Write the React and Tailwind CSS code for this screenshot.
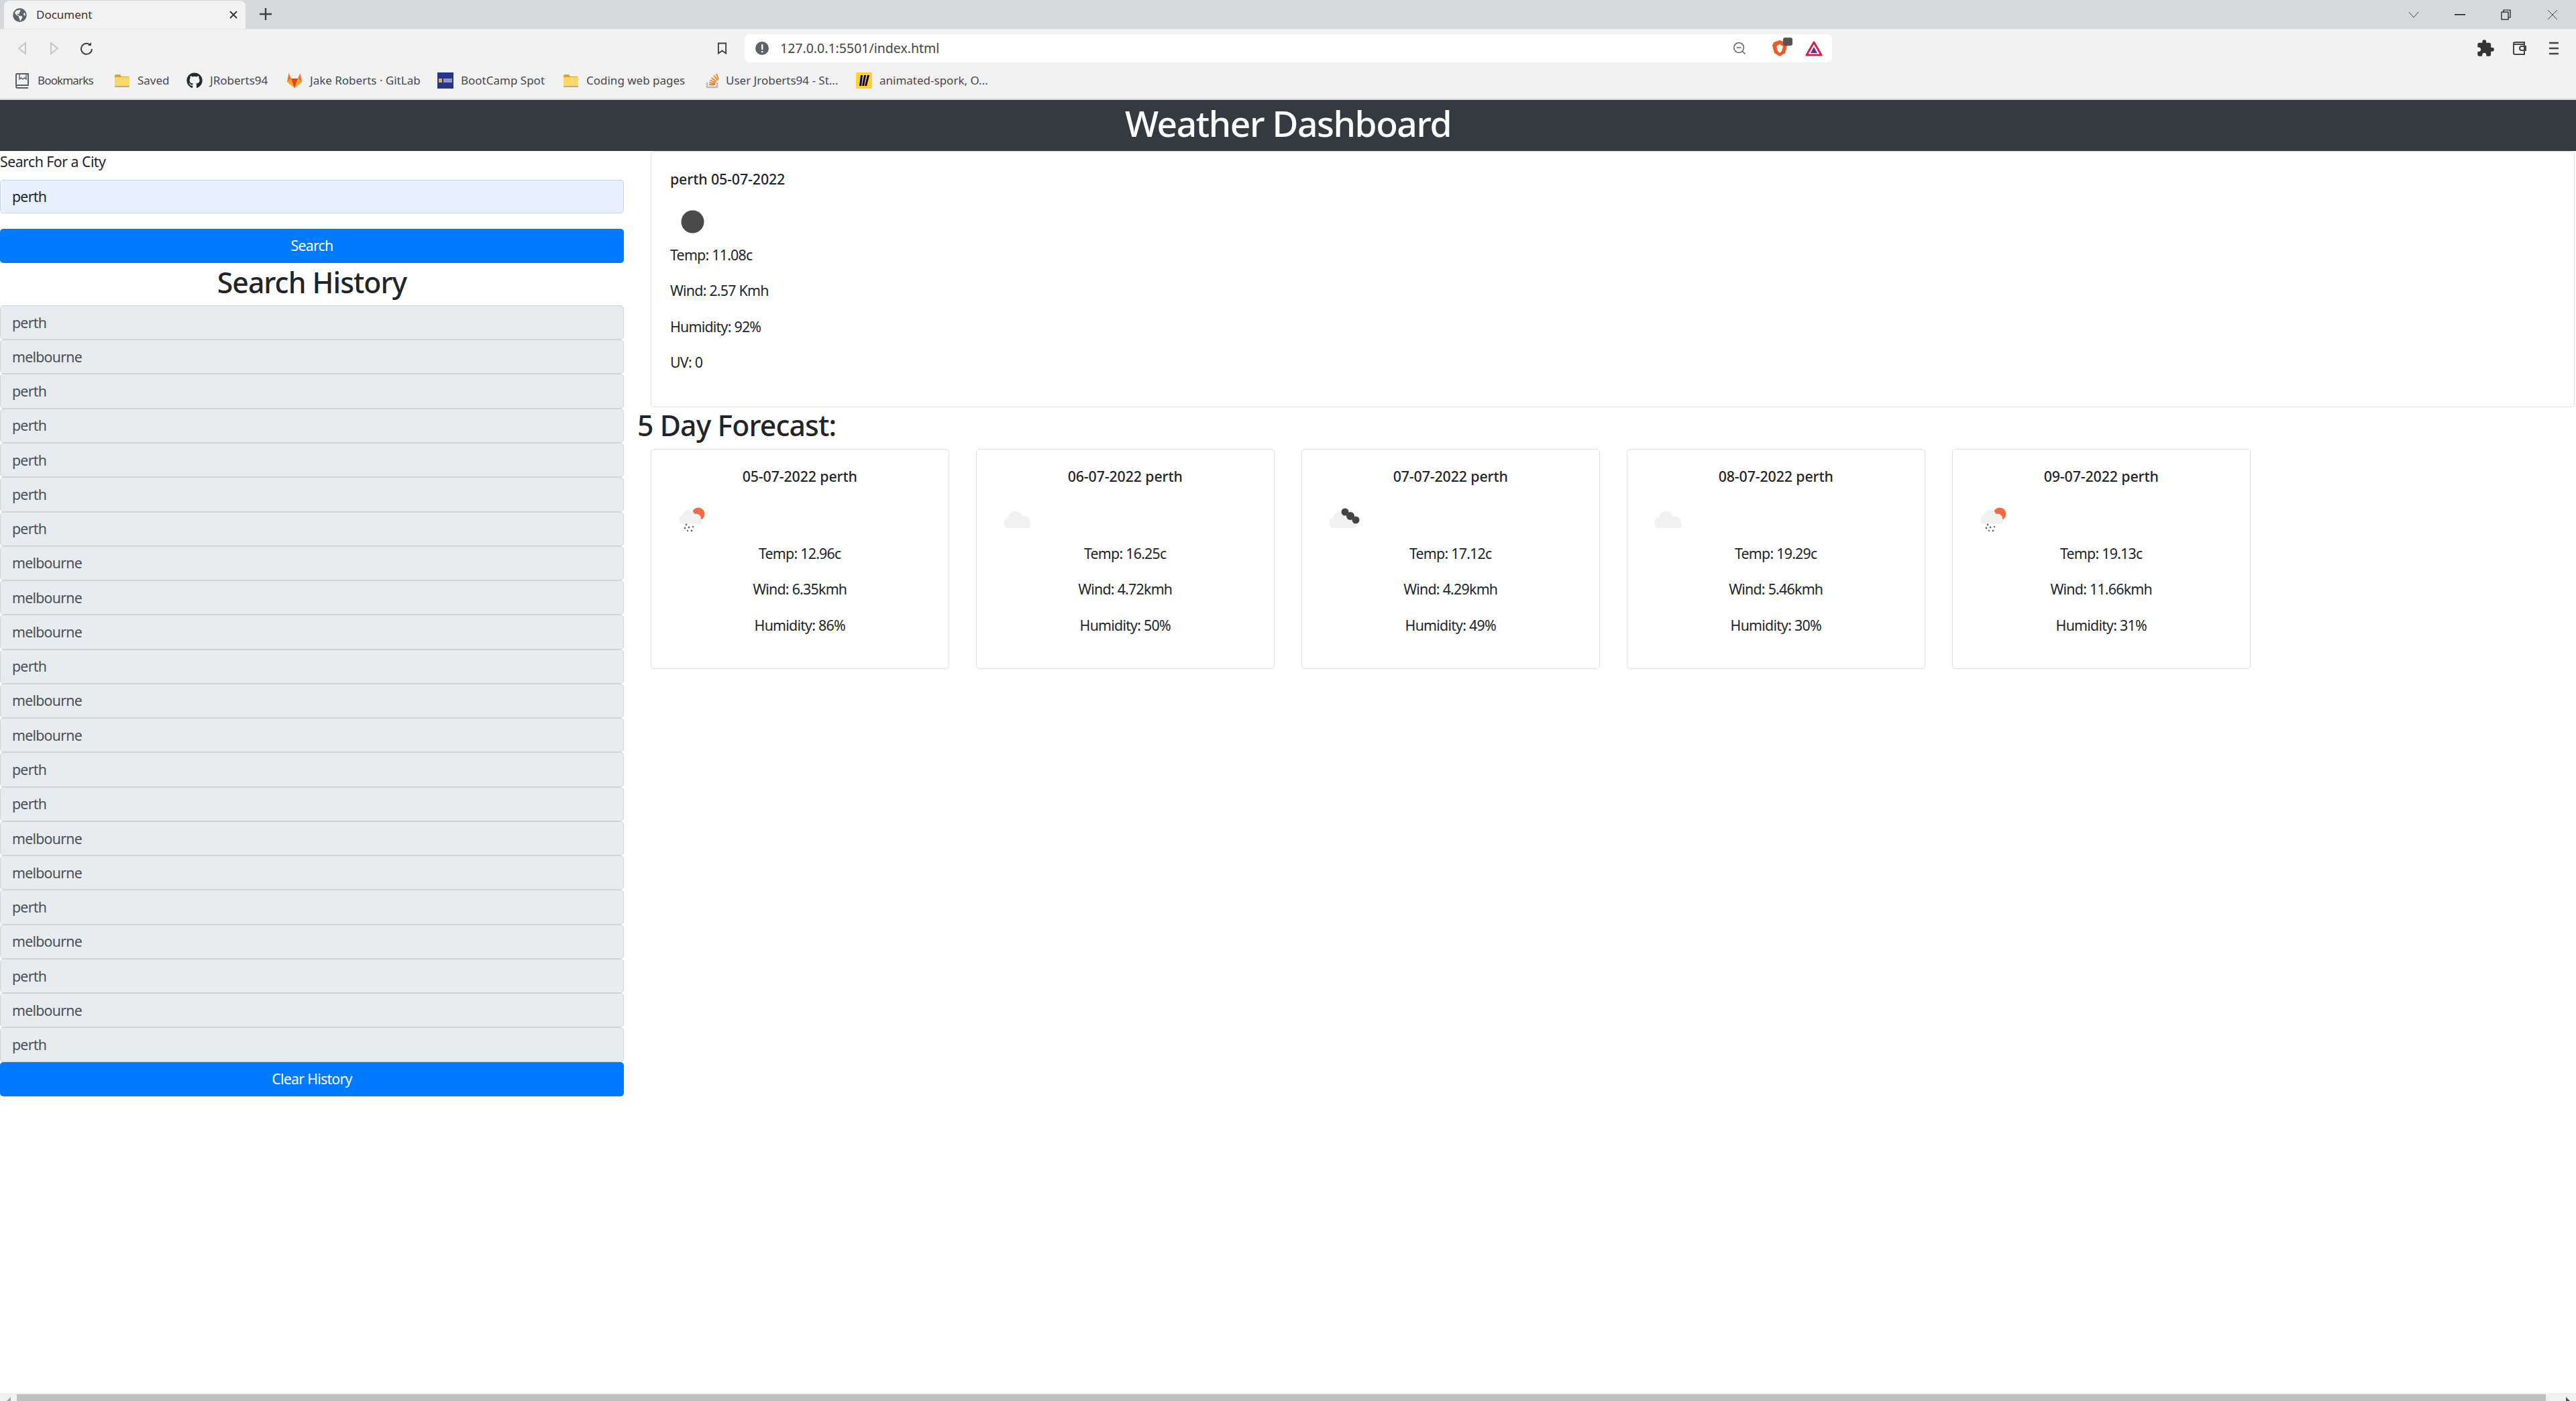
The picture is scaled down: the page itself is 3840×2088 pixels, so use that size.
import React from "react";
import { FaGithub, FaGlobeAmericas } from "react-icons/fa";
import { MdExtension } from "react-icons/md";
import { ZoomOut } from "lucide-react";

const history = ["perth","melbourne","perth","perth","perth","perth","perth","melbourne","melbourne","melbourne","perth","melbourne","melbourne","perth","perth","melbourne","melbourne","perth","melbourne","perth","melbourne","perth"];

const forecast = [
  { date: "05-07-2022", temp: "12.96", wind: "6.35", hum: "86", icon: "rain" },
  { date: "06-07-2022", temp: "16.25", wind: "4.72", hum: "50", icon: "cloud" },
  { date: "07-07-2022", temp: "17.12", wind: "4.29", hum: "49", icon: "dark" },
  { date: "08-07-2022", temp: "19.29", wind: "5.46", hum: "30", icon: "cloud" },
  { date: "09-07-2022", temp: "19.13", wind: "11.66", hum: "31", icon: "rain" },
];

function Cloud({ dx = 1.5, dy = 0, s = 1 }) {
  return (
    <g transform={`translate(${dx} ${dy}) scale(${s})`} fill="#f1f1f1">
      <circle cx="29" cy="33" r="11" />
      <circle cx="20" cy="39" r="8" />
      <circle cx="42" cy="38" r="9" />
      <rect x="13" y="38" width="39" height="9" rx="4.500" />
    </g>
  );
}

function Weather({ type, className = "" }) {
  return (
    <svg viewBox="0 0 67 67" className={`w-[67px] h-[67px] block ${className}`}>
      {type === "sun" && <circle cx="33.500" cy="33.500" r="17" fill="#4a4a4a" />}
      {type === "cloud" && <Cloud />}
      {type === "dark" && (
        <>
          <Cloud />
          <g fill="#444444">
            <circle cx="37" cy="23" r="5.500" />
            <circle cx="45" cy="29" r="6" />
            <circle cx="53" cy="35" r="5.500" />
          </g>
        </>
      )}
      {type === "rain" && (
        <>
          <circle cx="43" cy="26" r="9.500" fill="#f26b43" />
          <Cloud dx={4} dy={1} s={0.85} />
          <g fill="#666666">
            <circle cx="25" cy="42" r="1.400" />
            <circle cx="23" cy="47" r="1.400" />
            <circle cx="29" cy="46" r="1.400" />
            <circle cx="35" cy="45" r="1.200" />
            <circle cx="27" cy="51" r="1.200" />
            <circle cx="33" cy="51" r="1.400" />
          </g>
        </>
      )}
    </svg>
  );
}

function Folder() {
  return (
    <svg viewBox="0 0 24 24" className="w-[24px] h-[24px]">
      <path d="M1 5a2 2 0 0 1 2-2h6l2 3h10a2 2 0 0 1 2 2v12a2 2 0 0 1-2 2H3a2 2 0 0 1-2-2z" fill="#d9a431" />
      <rect x="1" y="7" width="22" height="14" rx="1.500" fill="#fdd768" />
      <rect x="1" y="20" width="22" height="2" rx="1" fill="#c9ad62" />
    </svg>
  );
}

function BookIcon() {
  return (
    <svg viewBox="0 0 24 24" className="w-[24px] h-[24px]" fill="none" stroke="#5b5f6b" strokeWidth="2">
      <path d="M3 19V3a1 1 0 0 1 1-1h17v17H5a2 2 0 0 0 0 4h16" />
      <path d="M8 2v8l2.500-2L13 10l2.500-2L18 10V2" strokeWidth="1.400" />
    </svg>
  );
}

function GitLabIcon() {
  return (
    <svg viewBox="0 0 24 24" className="w-[24px] h-[24px]">
      <path d="M12 23 1 14 3.500 1 7 9h10l3.500-8L23 14z" fill="#fc6d26" />
      <path d="M12 23 7 9h10z" fill="#e24329" />
      <path d="M12 23 1 14l6-5z" fill="#fca326" />
      <path d="M12 23l11-9-6-5z" fill="#fca326" />
    </svg>
  );
}

function BootIcon() {
  return (
    <svg viewBox="0 0 24 24" className="w-[24px] h-[24px]">
      <rect width="24" height="24" fill="#26348b" />
      <rect x="2" y="9" width="5" height="6" fill="#c7b663" />
      <rect x="9" y="9" width="13" height="6" fill="#8d97c4" />
    </svg>
  );
}

function StackIcon() {
  return (
    <svg viewBox="0 0 24 24" className="w-[24px] h-[24px] -mr-[3px]">
      <path d="M4 15v7h15v-7" fill="none" stroke="#bcbbbb" strokeWidth="2.500" />
      <path d="M7 18h9M7.300 15l9 1.500M8.300 11.500l8.500 3.500M10.500 8l7.500 5.500M14 4.500l6 7.500M18 2l3 8.500" fill="none" stroke="#f48024" strokeWidth="1.800" />
    </svg>
  );
}

function MiroIcon() {
  return (
    <svg viewBox="0 0 24 24" className="w-[24px] h-[24px]">
      <rect width="24" height="24" rx="2" fill="#ffd02f" />
      <path d="M7 4h3L8 20H5zM12 4h3l-3 16H9zM17 4h3l-4 16h-3z" fill="#050038" />
    </svg>
  );
}

function Mark({ icon, label, w, track = "tracking-normal" }) {
  return (
    <div className="flex items-center gap-[11px]">
      {icon}
      <span className={`${w} ${track} whitespace-nowrap text-[17px] leading-[24px] text-[#45474d]`}>{label}</span>
    </div>
  );
}

function Chrome() {
  return (
    <div className="w-full shrink-0">
      <div className="h-[43px] bg-[#d5d9dc] flex items-end pl-[6px] relative">
        <div className="w-[360px] h-[42px] bg-[#f3f3f3] rounded-t-[8px] flex items-center pl-[13px] pr-[11px]">
          <FaGlobeAmericas className="w-[21px] h-[21px] text-[#5f6368]" />
          <span className="ml-[14px] text-[17px] tracking-normal text-[#333]">Document</span>
          <svg viewBox="0 0 14 14" className="ml-auto w-[14px] h-[14px]" stroke="#333" strokeWidth="1.800"><path d="M2 2l10 10M12 2 2 12" /></svg>
        </div>
        <svg viewBox="0 0 20 20" className="ml-[20px] mb-[12px] w-[20px] h-[20px]" stroke="#3c4043" strokeWidth="2.400"><path d="M10 1v18M1 10h18" /></svg>
        <div className="ml-auto h-[43px] flex items-center">
          <svg viewBox="0 0 16 10" className="w-[16px] h-[10px] mr-[53px]" fill="none" stroke="#444" strokeWidth="1"><path d="M1 1l7 8 7-8" /></svg>
          <svg viewBox="0 0 16 2" className="w-[16px] h-[2px] mr-[53px]"><rect width="16" height="1.500" fill="#111" /></svg>
          <svg viewBox="0 0 16 16" className="w-[16px] h-[16px] mr-[53px]" fill="none" stroke="#111" strokeWidth="1.200"><rect x="1" y="4" width="10" height="11" /><path d="M4 4V1h10v11h-3" /></svg>
          <svg viewBox="0 0 16 16" className="w-[16px] h-[16px] mr-[27px]" fill="none" stroke="#333" strokeWidth="0.900"><path d="M1 1l14 14M15 1 1 15" /></svg>
        </div>
      </div>
      <div className="h-[106px] bg-[#f2f2f2] border-t border-t-[#e6e8ea] border-b-[2px] border-b-[#d5d9dc]">
        <div className="h-[56px] flex items-center relative">
          <svg viewBox="0 0 14 20" className="ml-[26px] w-[14px] h-[20px]" fill="none" stroke="#c4c6c9" strokeWidth="2"><path d="M12 2 2 10l10 8z" /></svg>
          <svg viewBox="0 0 14 20" className="ml-[34px] w-[14px] h-[20px]" fill="none" stroke="#c4c6c9" strokeWidth="2"><path d="M2 2l10 8-10 8z" /></svg>
          <svg viewBox="0 0 20 20" className="ml-[31px] w-[20px] h-[20px]" fill="none" stroke="#3c4043" strokeWidth="2"><path d="M16 5.500A8 8 0 1 0 18 11" /><path d="M17 1v5h-5z" fill="#3c4043" stroke="none" /></svg>
          <svg viewBox="0 0 16 20" className="ml-[930px] w-[15px] h-[20px]" fill="none" stroke="#3c4043" strokeWidth="2"><path d="M2 2h12v16l-6-4-6 4z" /></svg>
          <div className="ml-[26px] w-[1621px] h-[42px] bg-white rounded-[8px] flex items-center pl-[16px] pr-[14px]">
            <svg viewBox="0 0 20 20" className="w-[20px] h-[20px]"><circle cx="10" cy="10" r="10" fill="#5f6368" /><rect x="9" y="4" width="2.400" height="8" fill="#fff" /><rect x="9" y="14" width="2.400" height="2.400" fill="#fff" /></svg>
            <span className="ml-[17px] text-[19.500px] tracking-normal text-[#444]">127.0.0.1:5501/index.html</span>
            <ZoomOut className="ml-auto w-[22px] h-[22px] text-[#5f6368]" strokeWidth={1.700} />
            <div className="ml-[37px] relative w-[24px] h-[26px]">
              <svg viewBox="0 0 24 26" className="w-[24px] h-[26px]"><path d="M12 1l9 3 2 5-3 11-8 5-8-5L1 9l2-5z" fill="#f15a22" /><path d="M12 7l5 3-2 7-3 3-3-3-2-7z" fill="#fff" /></svg>
              <div className="absolute -top-[3px] -right-[7px] w-[14px] h-[12px] rounded-[3px] bg-[#555]" />
            </div>
            <svg viewBox="0 0 26 24" className="ml-[26px] w-[26px] h-[24px]" fill="none"><path d="M13 3 24 22H2z" stroke="#d6204b" strokeWidth="3" strokeLinejoin="round" /><path d="M13 10l5 9H8z" fill="#662d91" /></svg>
          </div>
          <MdExtension className="absolute left-[3691px] top-[14px] w-[28px] h-[28px] text-[#333]" />
          <svg viewBox="0 0 24 24" className="absolute left-[3744px] top-[16px] w-[24px] h-[24px]" fill="none" stroke="#444" strokeWidth="2"><path d="M3 5a2 2 0 0 1 2-2h14v18H5a2 2 0 0 1-2-2zM3 6h16M21 9h-6a3 3 0 0 0 0 6h6z" /></svg>
          <svg viewBox="0 0 16 20" className="absolute left-[3799px] top-[18px] w-[16px] h-[20px]" stroke="#444" strokeWidth="2.400"><path d="M1 2h14M1 10h14M1 18h14" /></svg>
        </div>
        <div className="h-[40px] flex items-center pl-[21px] gap-[26px]">
          <Mark icon={<BookIcon />} label="Bookmarks" w="w-[88px]" track="tracking-[-0.05em]" />
          <Mark icon={<Folder />} label="Saved" w="w-[47px]" />
          <Mark icon={<FaGithub className="w-[24px] h-[24px] text-[#24292e]" />} label="JRoberts94" w="w-[88px]" />
          <Mark icon={<GitLabIcon />} label="Jake Roberts · GitLab" w="w-[164px]" />
          <Mark icon={<BootIcon />} label="BootCamp Spot" w="w-[126px]" />
          <Mark icon={<Folder />} label="Coding web pages" w="w-[150px]" />
          <Mark icon={<StackIcon />} label="User Jroberts94 - St..." w="w-[168px]" />
          <Mark icon={<MiroIcon />} label="animated-spork, O..." w="w-[162px]" />
        </div>
      </div>
    </div>
  );
}

function Title({ children }) {
  return <h5 className="text-[21.330px] leading-[25.600px] font-medium tracking-[-0.005em] mb-[17.070px] text-[#212529]">{children}</h5>;
}

function Line({ children }) {
  return <p className="text-[21.330px] leading-[32px] tracking-[-0.035em] mb-[21.600px] text-[#212529]">{children}</p>;
}

export default function App() {
  return (
    <div className="w-[3840px] h-[2088px] overflow-hidden relative flex flex-col bg-white font-['Noto_Sans',sans-serif] text-[#212529]">
      <Chrome />
      <header className="h-[76px] shrink-0 bg-[#343a40] flex items-center justify-center pb-[6px]">
        <h1 className="text-[53.330px] leading-[64px] font-medium tracking-[-0.027em] text-white">Weather Dashboard</h1>
      </header>
      <div className="flex flex-1 min-h-0">
        <aside className="w-[930px] shrink-0">
          <label className="block text-[21.330px] leading-[32px] tracking-[-0.025em] mb-[10.670px]">Search For a City</label>
          <input readOnly value="perth" className="block w-full h-[50.670px] mb-[22.600px] bg-[#e8f0fe] border border-[#ced4da] rounded-[5px] px-[17px] text-[21.330px] tracking-[-0.035em] text-[#212529] outline-none" />
          <button className="block w-full h-[51px] bg-[#007bff] rounded-[5px] text-white text-[21.330px] tracking-[-0.035em]">Search</button>
          <h2 className="text-center text-[42.670px] leading-[51.200px] font-medium tracking-[-0.022em] pt-[3px] mb-[8.800px]">Search History</h2>
          <div>
            {history.map((c, i) => (
              <div key={i} className="h-[51.270px] flex items-center bg-[#e9ecef] border border-[#ced4da] rounded-[5px] pl-[17px] text-[21.330px] tracking-[-0.035em] text-[#495057]">{c}</div>
            ))}
          </div>
          <button className="block w-full h-[51px] bg-[#007bff] rounded-[5px] text-white text-[21.330px] tracking-[-0.035em]">Clear History</button>
        </aside>
        <main className="flex-1 min-w-0 ml-[20px]">
          <section className="ml-[20px] mr-[2px] border border-[#dfdfdf] rounded-[5px] p-[28px] h-[382px]">
            <Title>perth 05-07-2022</Title>
            <Weather type="sun" />
            <Line>Temp: 11.08c</Line>
            <Line>Wind: 2.57 Kmh</Line>
            <Line>Humidity: 92%</Line>
            <Line>UV: 0</Line>
          </section>
          <h2 className="text-[42.670px] leading-[51.200px] font-medium tracking-[-0.02em] pt-[1px] mb-[9.670px]">5 Day Forecast:</h2>
          <div className="flex gap-[40.500px] ml-[20px]">
            {forecast.map((f) => (
              <article key={f.date} className="w-[444.500px] h-[328px] border border-[#dfdfdf] rounded-[5px] p-[27px] text-center">
                <Title>{f.date} perth</Title>
                <Weather type={f.icon} className="mb-[2px]" />
                <Line>Temp: {f.temp}c</Line>
                <Line>Wind: {f.wind}kmh</Line>
                <Line>Humidity: {f.hum}%</Line>
              </article>
            ))}
          </div>
        </main>
      </div>
      <div className="absolute left-0 right-0 bottom-0 h-[12px] bg-[#f0f0f0] flex items-end">
        <svg viewBox="0 0 6 6" className="absolute left-[10px] bottom-0 w-[6px] h-[6px]"><path d="M6 0v6H0z" fill="#a3a3a3" /></svg>
        <div className="ml-[25px] w-[3770px] h-[10px] bg-[#bfbfbf]" />
        <svg viewBox="0 0 6 6" className="absolute left-[3825px] bottom-0 w-[6px] h-[6px]"><path d="M0 0l6 6H0z" fill="#505050" /></svg>
      </div>
    </div>
  );
}
